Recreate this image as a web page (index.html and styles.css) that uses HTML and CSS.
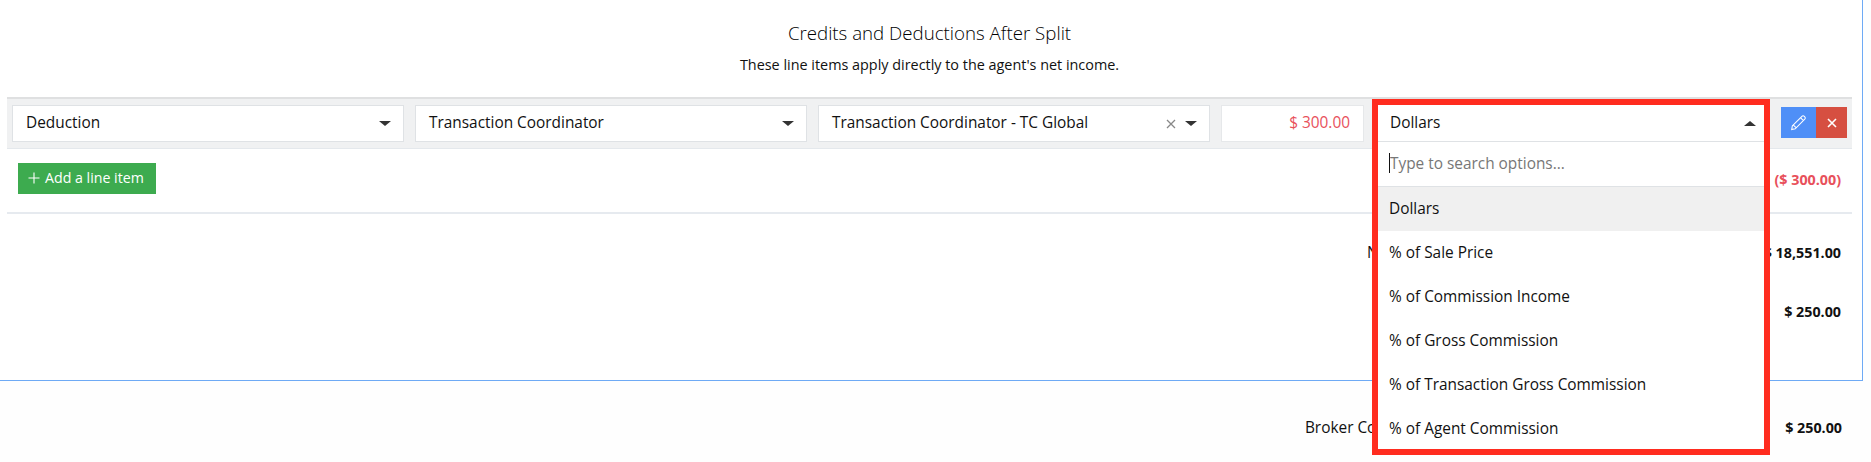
FILE: index.html
```html
<!DOCTYPE html>
<html lang="en">

<head>
    <meta charset="UTF-8">
    <title>Credits and Deductions</title>
    <link rel="stylesheet" href="styles.css">
</head>

<body>
    <div class="panel">
        <h2 class="section-title">Credits and Deductions After Split</h2>
        <p class="section-note">These line items apply directly to the agent's net income.</p>

        <div class="line-row">
            <div class="select wide"><span>Deduction</span><i class="caret"></i></div>
            <div class="select wide"><span>Transaction Coordinator</span><i class="caret"></i></div>
            <div class="select wide">
                <span>Transaction Coordinator - TC Global</span>
                <svg class="clear" viewBox="0 0 10 10"><path d="M1 1l8 8M9 1l-8 8"/></svg>
                <i class="caret"></i>
            </div>
            <div class="amount">$ 300.00</div>
            <div class="dropdown-cell">
                <div class="dropdown">
                    <div class="dropdown-head"><span>Dollars</span><i class="caret caret-up"></i></div>
                    <div class="dropdown-search"><i class="text-cursor"></i><span>Type to search options...</span></div>
                    <div class="option option-active">Dollars</div>
                    <div class="option">% of Sale Price</div>
                    <div class="option">% of Commission Income</div>
                    <div class="option">% of Gross Commission</div>
                    <div class="option">% of Transaction Gross Commission</div>
                    <div class="option">% of Agent Commission</div>
                </div>
            </div>
            <div class="row-actions">
                <button class="btn-edit">
                    <svg viewBox="0 0 16 16"><path d="M2.2 11.2L11.2 2.2a1.6 1.6 0 0 1 2.3 0l.4.4a1.6 1.6 0 0 1 0 2.3L4.9 13.9 1.6 14.6zM9.9 3.5l2.7 2.7M3.2 10.4l2.5 2.5"/></svg>
                </button>
                <button class="btn-remove">
                    <svg viewBox="0 0 12 12"><path d="M2 2l8 8M10 2l-8 8"/></svg>
                </button>
            </div>
        </div>

        <div class="add-row">
            <button class="btn-add">
                <svg viewBox="0 0 12 12"><path d="M6 .5v11M.5 6h11"/></svg>
                Add a line item
            </button>
            <span class="total-negative">($ 300.00)</span>
        </div>

        <div class="summary">
            <div class="summary-row summary-net"><span class="summary-label">Net Income</span><b class="summary-value">$ 18,551.00</b></div>
            <div class="summary-row summary-cap"><span class="summary-label"></span><b class="summary-value">$ 250.00</b></div>
        </div>
    </div>

    <div class="summary-row summary-broker"><span class="summary-label">Broker Commission</span><b class="summary-value">$ 250.00</b></div>
</body>

</html>
```

FILE: styles.css
```css
* {
    margin: 0;
    padding: 0;
    box-sizing: border-box;
}

body {
    width: 1871px;
    height: 462px;
    overflow: hidden;
    background: #fefefe;
    color: #111;
    font-family: "Open Sans", "Liberation Sans", sans-serif;
    font-size: 15.4px;
}

.panel {
    width: 1863px;
    height: 381px;
    padding: 21px 10px 0 7px;
    background: #fff;
    border-right: 1px solid #6eaaf5;
    border-bottom: 1px solid #6eaaf5;
}

.section-title {
    color: #000;
    font-size: 18.7px;
    font-weight: 300;
    line-height: 24px;
    text-align: center;
}

.section-note {
    margin-top: 10px;
    font-size: 14.4px;
    line-height: 20px;
    text-align: center;
}

/* line item row */
.line-row {
    display: flex;
    align-items: flex-start;
    height: 52px;
    margin-top: 22px;
    padding: 6px 0 0 5px;
    background: #f0f1f2;
    border-top: 2px solid #dfe0e1;
    border-bottom: 1px solid #e4e8ec;
}

.select {
    display: flex;
    align-items: center;
    height: 37px;
    margin-right: 11px;
    padding: 0 12px 2px 13px;
    background: #fff;
    border: 1px solid #dfe2e5;
}

.select.wide {
    width: 392px;
}

.select span {
    flex: 1;
}

.caret {
    width: 0;
    height: 0;
    margin-top: 2px;
    border-left: 6px solid transparent;
    border-right: 6px solid transparent;
    border-top: 5.5px solid #333;
}

.caret-up {
    border-top: 0;
    border-bottom: 5.5px solid #333;
}

.clear {
    width: 10px;
    height: 10px;
    margin: 2px 9px 0 0;
    fill: none;
    stroke: #888;
    stroke-width: 1.3;
}

.amount {
    width: 143px;
    height: 37px;
    padding: 0 13px;
    background: #fff;
    border: 1px solid #e6e8ea;
    color: #e8505b;
    line-height: 33px;
    text-align: right;
}

.dropdown-cell {
    position: relative;
    width: 398px;
    height: 37px;
    margin-left: 8px;
}

.dropdown {
    position: absolute;
    top: -6px;
    left: 0;
    width: 398px;
    height: 356px;
    background: #fff;
    border: 6px solid #ff2c1f;
}

.dropdown-head {
    display: flex;
    align-items: center;
    justify-content: space-between;
    height: 37px;
    padding: 0 8px 2px 12px;
    border-bottom: 1px solid #dfe2e5;
}

.dropdown-search {
    display: flex;
    align-items: center;
    height: 45px;
    padding: 0 0 2px 11px;
    color: #777;
    border-bottom: 1px solid #dfe2e5;
}

.text-cursor {
    width: 1px;
    height: 20px;
    background: #111;
}

.option {
    height: 44px;
    padding-left: 11px;
    line-height: 43px;
}

.option-active {
    background: #f0f0f0;
}

.row-actions {
    display: flex;
    margin: 2px 0 0 11px;
}

.row-actions button {
    display: flex;
    align-items: center;
    justify-content: center;
    height: 31px;
    border: 0;
}

.btn-edit {
    width: 35px;
    background: #4f8ff7;
}

.btn-edit svg {
    width: 17px;
    height: 17px;
    fill: none;
    stroke: #fff;
    stroke-width: 1;
}

.btn-remove {
    width: 31px;
    background: #d64f41;
}

.btn-remove svg {
    width: 12px;
    height: 12px;
    fill: none;
    stroke: #fff;
    stroke-width: 1.6;
}

/* add button and running total */
.add-row {
    display: flex;
    justify-content: space-between;
    height: 65px;
    padding: 14px 11px 0;
    border-bottom: 2px solid #e6eaef;
}

.btn-add {
    display: flex;
    align-items: center;
    gap: 5px;
    width: 138px;
    height: 31px;
    padding: 0 0 2px 10px;
    background: #3dab4f;
    border: 0;
    color: #fff;
    font-family: inherit;
    font-size: 14.2px;
}

.btn-add svg {
    width: 12px;
    height: 12px;
    fill: none;
    stroke: #fff;
    stroke-width: 1.1;
}

.total-negative {
    margin-top: 7px;
    color: #e8505b;
    font-size: 14.3px;
    font-weight: 700;
    line-height: 20px;
}

/* totals below the line items */
.summary-row {
    display: flex;
    justify-content: flex-end;
    padding-right: 11px;
    line-height: 20px;
}

.summary-label {
    text-align: right;
}

.summary-value {
    width: 396px;
    font-size: 14.3px;
    text-align: right;
}

.summary-net {
    margin-top: 29px;
}

.summary-net .summary-value {
    width: 391px;
}

.summary-cap {
    margin-top: 39px;
}

.summary-broker {
    width: 1863px;
    margin-top: 37px;
    padding-right: 21px;
}
```
